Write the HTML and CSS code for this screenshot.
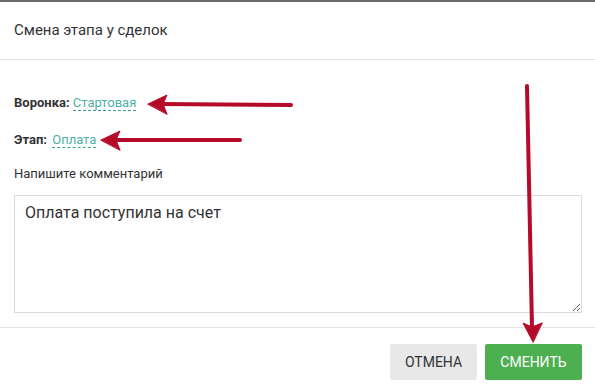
FILE: index.html
```html
<!DOCTYPE html>
<html>
<head>
	<meta charset="utf-8">
	<title>Смена этапа у сделок</title>
	<link rel="stylesheet" href="styles.css">
</head>
<body>
	<div class="dialog">
		<div class="header">Смена этапа у сделок</div>
		<div class="content">
			<div class="row">
				<span class="label">Воронка:</span>
				<a class="pick" href="#">Стартовая</a>
			</div>
			<div class="row second">
				<span class="label">Этап:</span>
				<a class="pick" href="#">Оплата</a>
			</div>
			<div class="caption">Напишите комментарий</div>
			<textarea class="comment" spellcheck="false">Оплата поступила на счет</textarea>
		</div>
		<div class="footer">
			<button class="btn cancel">Отмена</button>
			<button class="btn submit">Сменить</button>
		</div>
	</div>

	<svg class="marks" width="595" height="392" viewBox="0 0 595 392">
		<g fill="#b50b28" stroke="#b50b28" stroke-linecap="round">
			<line x1="291" y1="105" x2="160" y2="104" stroke-width="4"/>
			<polygon points="148,104 167,95 163,104 167,114" stroke-width="1"/>
			<line x1="240" y1="140" x2="112" y2="140" stroke-width="4"/>
			<polygon points="101,140 120,131 116,140 120,150" stroke-width="1"/>
			<line x1="527" y1="86" x2="532" y2="328" stroke-width="4"/>
			<polygon points="533,342 523,323 532,327 542,323" stroke-width="1"/>
		</g>
	</svg>
</body>
</html>
```

FILE: styles.css
```css
html, body {
	margin: 0;
	padding: 0;
	background: #fff;
}
body {
	width: 595px;
	height: 392px;
	overflow: hidden;
	position: relative;
	font-family: Roboto, "Liberation Sans", sans-serif;
	color: #333;
}
.dialog {
	border-top: 2px solid #6b6b6b;
}
.header {
	height: 57px;
	line-height: 57px;
	padding-left: 14px;
	font-size: 15px;
	border-bottom: 1px solid #e3e3e3;
}
.content {
	padding: 35px 13px 14px 14px;
}
.row {
	height: 16px;
	line-height: 16px;
	font-size: 13px;
}
.row.second {
	margin-top: 21px;
}
.label {
	font-weight: bold;
	color: #333;
}
.pick {
	color: #4fb0a6;
	text-decoration: none;
	border-bottom: 1px dashed #3f9e94;
}
.row.second .pick {
	margin-left: 2px;
}
.caption {
	margin-top: 18px;
	height: 16px;
	line-height: 16px;
	font-size: 13px;
	color: #333;
}
.comment {
	display: block;
	margin-top: 13px;
	width: 568px;
	height: 118px;
	box-sizing: border-box;
	border: 1px solid #dcdcdc;
	padding: 7px 10px;
	font-family: Roboto, "Liberation Sans", sans-serif;
	font-size: 16px;
	line-height: 20px;
	color: #333;
	outline: none;
}
.footer {
	border-top: 1px solid #e3e3e3;
	padding: 16px 13px 0 0;
	display: flex;
	justify-content: flex-end;
	gap: 8px;
}
.btn {
	height: 36px;
	border: 0;
	border-radius: 2px;
	font-family: Roboto, "Liberation Sans", sans-serif;
	font-size: 14px;
	text-transform: uppercase;
	padding: 0;
	cursor: pointer;
}
.cancel {
	width: 87px;
	background: #e8e8e8;
	color: #333;
}
.submit {
	width: 97px;
	background: #4caf50;
	color: #fff;
}
.marks {
	position: absolute;
	left: 0;
	top: 0;
	pointer-events: none;
}
```
